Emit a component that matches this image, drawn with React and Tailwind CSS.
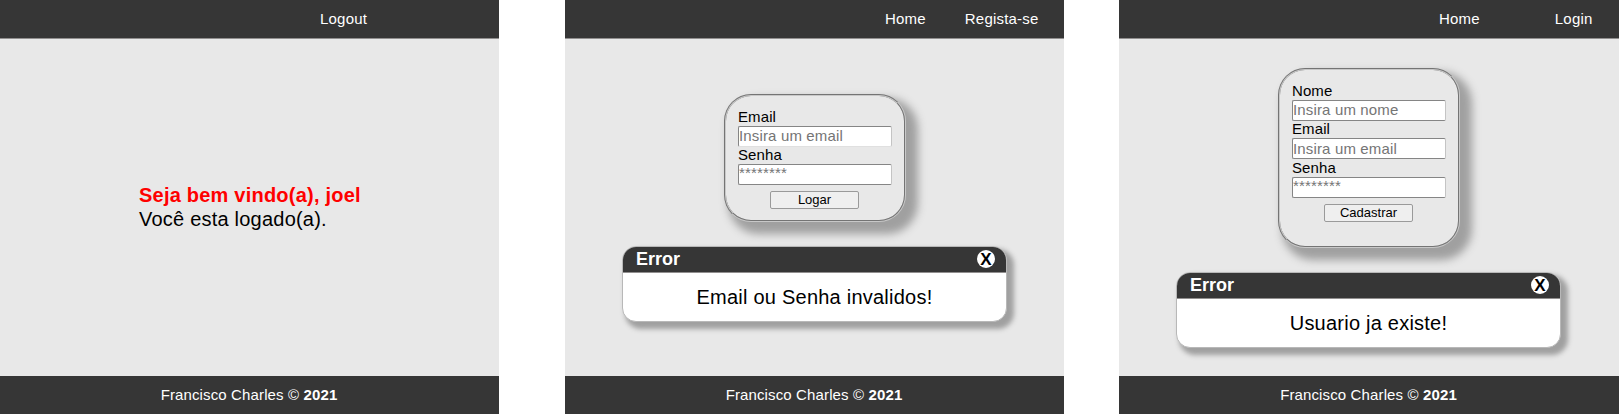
const font = "font-['Liberation_Sans',Arial,sans-serif]";

function Footer() {
  return (
    <footer className="flex h-[38px] shrink-0 items-center justify-center bg-[#363636] pr-px text-[15px] leading-[18px] tracking-[0.13px] text-white">
      <p>
        Francisco Charles © <b>2021</b>
      </p>
    </footer>
  );
}

function Screen({ nav, className, children }) {
  return (
    <section className={`flex h-[414px] flex-col bg-[#e8e8e8] text-black ${className}`}>
      <header className="flex h-[39px] shrink-0 items-center border-b border-[#918f8f] bg-[#363636] text-[15px] leading-[18px] tracking-[0.2px] text-white">
        {nav}
      </header>
      <main className="flex min-h-0 flex-1 flex-col">{children}</main>
      <Footer />
    </section>
  );
}

function Field({ label, placeholder, className = "", inputClass = "pb-[2px]" }) {
  return (
    <label className={`flex flex-col text-[15px] leading-[15px] ${className}`}>
      <span className="h-[17px] tracking-[0.1px]">{label}</span>
      <input
        placeholder={placeholder}
        className={`h-[21px] w-[154px] rounded-[2px] border border-[#858585] border-r-[#c4c4c4] bg-white text-[15px] tracking-[0.15px] placeholder:text-[#757575] ${inputClass}`}
      />
    </label>
  );
}

function Form({ action, className, children }) {
  return (
    <form className={`flex w-[182px] flex-col items-center self-start rounded-[27px] border-2 border-[#c8c8c8] [border-style:groove] bg-[#e8e8e8] pt-[13px] shadow-[8px_8px_8px_4px_#a0a0a0] ${className}`}>
      {children}
      <button type="button" className="mr-px mt-[6px] h-[18px] w-[89px] rounded-[2px] border border-[#9a9a9a] bg-[#efefef] text-[13px] leading-[14px]">
        {action}
      </button>
    </form>
  );
}

function ErrorBox({ message, className }) {
  return (
    <div className={`flex h-[76px] w-[385px] shrink-0 flex-col overflow-hidden rounded-[14px] border border-[#b8b8b8] bg-white shadow-[5px_5px_5px_2px_#a0a0a0] ${className}`}>
      <div className="flex h-[26px] shrink-0 items-start justify-between border-b border-[#918f8f] bg-[#363636] pl-[13px] pr-[11px]">
        <b className="text-[18px] leading-[24px] text-white">Error</b>
        <b className="mt-[3px] flex h-[18px] w-[18px] items-center justify-center rounded-full bg-white text-[17px] leading-[17px]">X</b>
      </div>
      <p className="pt-[12px] text-center text-[20px] leading-6 tracking-[0.23px]">{message}</p>
    </div>
  );
}

export default function App() {
  return (
    <div className={`flex h-[414px] w-[1619px] overflow-hidden bg-white ${font}`}>
      <Screen className="w-[499px]" nav={<a className="ml-[320px]">Logout</a>}>
        <div className="ml-[139px] mt-[144px] text-[20px] leading-6 tracking-[0.22px]">
          <p className="font-bold text-[#ff0000]">Seja bem vindo(a), joel</p>
          <p>Você esta logado(a).</p>
        </div>
      </Screen>

      <Screen
        className="ml-[66px] w-[499px]"
        nav={
          <>
            <a className="ml-[320px]">Home</a>
            <a className="ml-[39px]">Regista-se</a>
          </>
        }
      >
        <Form action="Logar" className="ml-[159px] mt-[55px] h-[128px]">
          <Field label="Email" placeholder="Insira um email" inputClass="border-b-[#e0e0e0] pb-[2px]" />
          <Field label="Senha" placeholder="********" inputClass="pb-[5px]" />
        </Form>
        <ErrorBox message="Email ou Senha invalidos!" className="ml-[57px] mt-[24px]" />
      </Screen>

      <Screen
        className="ml-[55px] w-[500px]"
        nav={
          <>
            <a className="ml-[320px]">Home</a>
            <a className="ml-[75px]">Login</a>
          </>
        }
      >
        <Form action="Cadastrar" className="ml-[159px] mt-[29px] h-[180px]">
          <Field label="Nome" placeholder="Insira um nome" />
          <Field label="Email" placeholder="Insira um email" inputClass="" />
          <Field label="Senha" placeholder="********" className="pt-px" inputClass="pb-[5px]" />
        </Form>
        <ErrorBox message="Usuario ja existe!" className="ml-[57px] mt-[24px]" />
      </Screen>
    </div>
  );
}
